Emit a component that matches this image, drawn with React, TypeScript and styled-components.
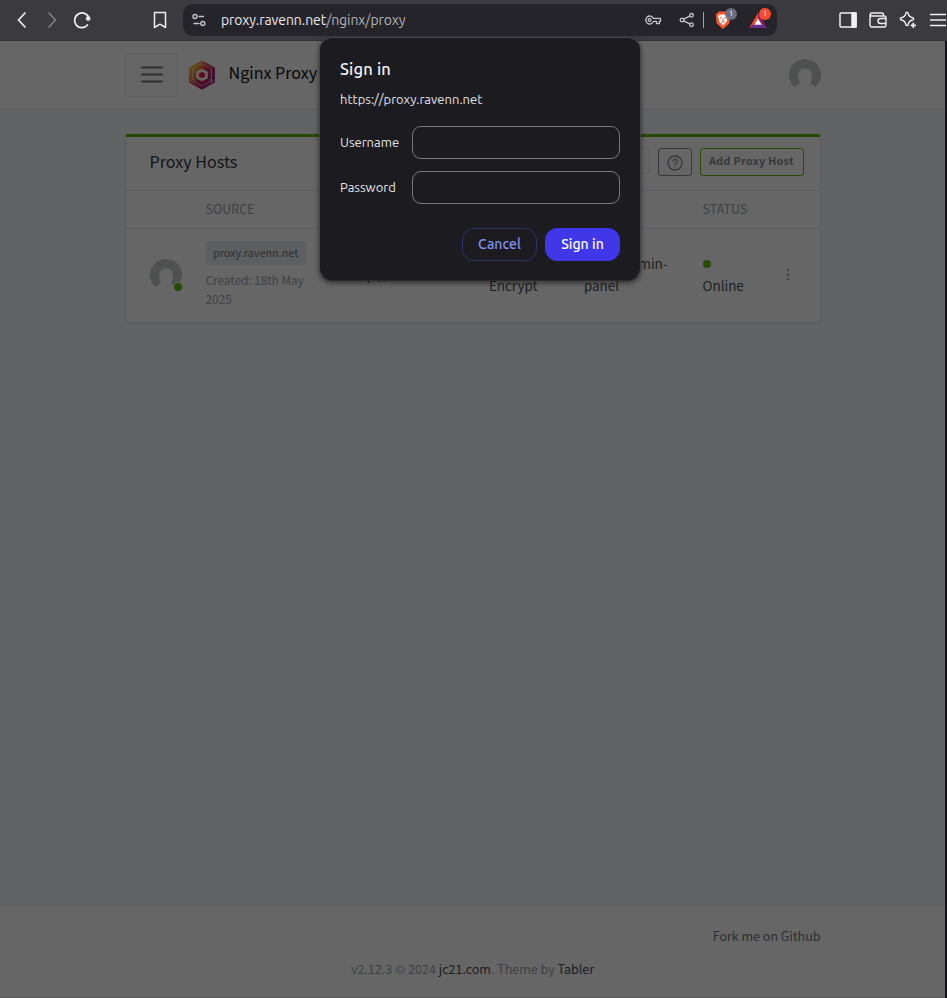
import React from "react";
import styled, { createGlobalStyle } from "styled-components";

const uiFont = `Ubuntu, "Noto Sans", "Open Sans", sans-serif`;
const pageFont = `"Source Sans Pro", "Noto Sans CJK SC", "Noto Sans", sans-serif`;

const GlobalStyle = createGlobalStyle`
  *, *::before, *::after { box-sizing: border-box; }
  body { margin: 0; background: #121214; overflow: hidden; }
`;

const Window = styled.div`
  position: relative;
  width: 947px;
  height: 998px;
  overflow: hidden;
  display: flex;
  flex-direction: column;
`;

/* ---------- browser chrome ---------- */
const Toolbar = styled.div`
  height: 41px;
  flex: none;
  display: flex;
  align-items: center;
  padding: 0 0 1px 7px;
  background: #3b3a3f;
  border-bottom: 1px solid #323136;
  overflow: hidden;
`;
const ToolSlot = styled.div<{ $dim?: boolean }>`
  width: 30px;
  height: 30px;
  flex: none;
  display: flex;
  align-items: center;
  justify-content: center;
  color: ${(p) => (p.$dim ? "#858489" : "#f0eff4")};
  svg { display: block; }
`;
const Spacer = styled.div<{ $w: number }>`
  width: ${(p) => p.$w}px;
  flex: none;
`;
const AddressBar = styled.div`
  width: 594px;
  height: 32px;
  flex: none;
  display: flex;
  align-items: center;
  padding-left: 8px;
  border-radius: 10px;
  background: #25242a;
  color: #c5c4ca;
  svg { display: block; flex: none; }
`;
const Address = styled.div`
  width: 423px;
  flex: none;
  padding-left: 14px;
  font: 14px/20px ${uiFont};
  letter-spacing: -0.07px;
  color: #b4b3b9;
  white-space: nowrap;
  b { font-weight: 400; color: #e9e8ee; }
`;
const BarDivider = styled.div`
  width: 1px;
  height: 16px;
  flex: none;
  margin: 0 11px 0 8px;
  background: #a5a4aa;
`;
const Extension = styled.div`
  position: relative;
  width: 34px;
  height: 20px;
  flex: none;
`;
const Counter = styled.span<{ $color: string }>`
  position: absolute;
  left: 10px;
  top: -2px;
  width: 12px;
  height: 12px;
  border-radius: 6px;
  background: ${(p) => p.$color};
  color: #fff;
  font: 8px/12px ${uiFont};
  text-align: center;
`;

/* ---------- web page ---------- */
const Page = styled.div`
  position: relative;
  width: 945px;
  flex: 1;
  display: flex;
  flex-direction: column;
  background: #f5f7fb;
  color: #495057;
  font: 13.4px/21px ${pageFont};
`;
const Scrim = styled.div`
  position: absolute;
  inset: 0;
  background: rgba(0, 0, 0, 0.6);
`;
const Header = styled.header`
  height: 69px;
  flex: none;
  padding: 0 124px 0 125px;
  display: flex;
  align-items: center;
  background: #fff;
  border-bottom: 1px solid rgba(0, 40, 100, 0.12);
`;
const MenuButton = styled.div`
  width: 53px;
  height: 44px;
  display: flex;
  align-items: center;
  justify-content: center;
  border: 1px solid rgba(0, 40, 100, 0.12);
  border-radius: 3px;
`;
const Brand = styled.div`
  flex: 1;
  display: flex;
  align-items: center;
  gap: 12.5px;
  padding-left: 10px;
  color: #111;
  font-size: 16.1px;
  white-space: nowrap;
  span { padding-bottom: 5px; }
`;
const Avatar = styled.div`
  position: relative;
  width: 32px;
  height: 32px;
  svg { display: block; }
`;
const Presence = styled.span`
  position: absolute;
  right: -1px;
  bottom: -1px;
  width: 10px;
  height: 10px;
  border-radius: 50%;
  border: 1px solid #fff;
  background: #5eba00;
`;
const Card = styled.section`
  width: 696px;
  height: 189px;
  margin: 24px 0 0 125px;
  display: flex;
  flex-direction: column;
  background: #fff;
  border: 1px solid rgba(0, 40, 100, 0.12);
  border-top: 3px solid #5eba00;
  border-radius: 3px;
  box-shadow: 0 1px 2px rgba(0, 0, 0, 0.05);
`;
const CardHeader = styled.div`
  height: 54px;
  flex: none;
  display: flex;
  align-items: center;
  padding: 0 16px 4px 23.6px;
  border-bottom: 1px solid rgba(0, 40, 100, 0.14);
`;
const CardTitle = styled.h3`
  margin: 0;
  flex: 1;
  font-size: 16.1px;
  font-weight: 400;
  color: #343a40;
`;
const SearchBox = styled.div`
  width: 138px;
  height: 26px;
  margin: 0 8px 2px 0;
  border: 1px solid rgba(0, 40, 100, 0.12);
  border-radius: 3px;
`;
const SmallButton = styled.div<{ $w: number; $border: string }>`
  width: ${(p) => p.$w}px;
  height: 28px;
  margin-left: ${(p) => (p.$w > 50 ? 8 : 0)}px;
  display: flex;
  align-items: center;
  justify-content: center;
  border: 1px solid ${(p) => p.$border};
  border-radius: 3px;
  color: #868e96;
  font-size: 10.7px;
  font-weight: 700;
  letter-spacing: 0.35px;
  white-space: nowrap;
  span { padding: 0 1px 2px 0; }
  svg { margin-top: 2px; }
`;
const TableRow = styled.div<{ $head?: boolean }>`
  display: grid;
  grid-template-columns: 56px 143px 140.4px 95px 118.6px 77px 1fr;
  padding: 0 0 ${(p) => (p.$head ? 1 : 2)}px 23.6px;
  align-items: center;
  height: ${(p) => (p.$head ? 38 : 93)}px;
  ${(p) =>
    p.$head &&
    `border-bottom: 1px solid rgba(0,40,100,.14);
     color: #9aa0ac; font-size: 12.5px; text-transform: uppercase;`}
`;
const Cell = styled.div<{ $shift?: number }>`
  line-height: 22px;
  white-space: nowrap;
  padding-bottom: ${(p) => p.$shift || 0}px;
`;
const Tag = styled.div`
  width: 100px;
  height: 24px;
  border-radius: 3px;
  background: #e9ecef;
  color: #6e7687;
  font-size: 10.85px;
  line-height: 23px;
  text-align: center;
`;
const Note = styled.div`
  margin-top: 5px;
  color: #9aa0ac;
  font-size: 11.75px;
  line-height: 19px;
`;
const Dot = styled.span`
  display: block;
  width: 8px;
  height: 8px;
  margin: 8px 0 6px;
  border-radius: 50%;
  background: #5eba00;
`;
const DotMenu = styled.div`
  padding-top: 1px;
  svg { display: block; }
`;
const Footer = styled.footer`
  height: 93px;
  margin-top: auto;
  padding: 19px 124.5px 0;
  background: #fff;
  border-top: 1px solid rgba(0, 40, 100, 0.12);
  border-bottom: 1px solid #e6d8e0;
  color: #9aa0ac;
  font-size: 12.5px;
`;
const FooterLink = styled.div`
  text-align: right;
  color: #6e7687;
`;
const Copyright = styled.div`
  margin-top: 12px;
  text-align: center;
  b { font-weight: 400; color: #495057; }
`;

/* ---------- sign-in dialog ---------- */
const Dialog = styled.div`
  position: absolute;
  left: 319px;
  top: 37px;
  width: 322px;
  height: 244px;
  padding: 21px 20px 19px;
  border: 1px solid #45444b;
  border-bottom-color: #2b2a2f;
  border-radius: 13px;
  background: #1c1b20;
  box-shadow: 0 2px 5px rgba(0, 0, 0, 0.5);
  color: #e3e2e8;
  font: 13px/20px ${uiFont};
  display: flex;
  flex-direction: column;
`;
const DialogTitle = styled.div`
  font-size: 16.5px;
  font-weight: 500;
  letter-spacing: 0.15px;
  color: #f0eff5;
`;
const Origin = styled.div`
  margin: 10px 0 17px;
`;
const Field = styled.label`
  display: flex;
  align-items: center;
  height: 33px;
  margin-bottom: 12px;
  span { width: 72px; padding-bottom: 2px; }
`;
const Input = styled.input`
  width: 208px;
  height: 33px;
  padding: 0 10px;
  border: 1px solid #78777e;
  border-radius: 9px;
  background: transparent;
  color: inherit;
  outline: none;
`;
const Actions = styled.div`
  display: flex;
  justify-content: flex-end;
  gap: 8px;
  margin-top: 12px;
`;
const Button = styled.button<{ $primary?: boolean }>`
  width: 75px;
  height: 33px;
  padding: 0 0 2px;
  border: 1px solid ${(p) => (p.$primary ? "#4038e8" : "#30306f")};
  border-radius: 12px;
  background: ${(p) => (p.$primary ? "#4038e8" : "transparent")};
  color: ${(p) => (p.$primary ? "#fff" : "#8593f0")};
  font: 500 14px/20px ${uiFont};
  letter-spacing: 0.05px;
`;

/* ---------- drawings ---------- */
const Stroke = ({ w, h = w, sw = 1.5, children }: { w: number; h?: number; sw?: number; children: React.ReactNode }) => (
  <svg width={w} height={h} viewBox={`0 0 ${w} ${h}`} fill="none" stroke="currentColor" strokeWidth={sw} strokeLinecap="round" strokeLinejoin="round">
    {children}
  </svg>
);

const Person = () => (
  <svg width="32" height="32" viewBox="0 0 32 32">
    <path
      fill="#c6c7c8"
      fillRule="evenodd"
      d="M16 0a16 16 0 0 1 10.4 28.2c-1.5-2-3.4-3.1-5.8-3.7a8.5 8.5 0 0 0 2.3-7.7c0-4.5-2.8-7.5-6.9-7.5s-6.9 3-6.9 7.5c0 3.1 .8 5.9 2.3 7.7-2.4.6-4.3 1.7-5.8 3.7A16 16 0 0 1 16 0Z"
    />
  </svg>
);

const Logo = () => (
  <svg width="28" height="30" viewBox="0 0 28 30">
    <defs>
      <linearGradient id="brand" x1="0" y1=".2" x2="1" y2=".75">
        <stop offset="0" stopColor="#f9c22e" />
        <stop offset=".3" stopColor="#f28a2c" />
        <stop offset=".55" stopColor="#dd2f50" />
        <stop offset="1" stopColor="#7d2a90" />
      </linearGradient>
      <linearGradient id="lower" x1="0" y1="0" x2="0" y2="1">
        <stop offset=".55" stopColor="#b01874" stopOpacity="0" />
        <stop offset="1" stopColor="#b01874" />
      </linearGradient>
    </defs>
    <path d="M14 .5 27 7.8v14.4L14 29.5 1 22.2V7.8Z" fill="url(#brand)" />
    <path d="M14 .5 27 7.8v14.4L14 29.5 1 22.2V7.8Z" fill="url(#lower)" />
    <path d="M12 4.3 4.5 8.5v9.5M16 4.3l7.5 4.2v9.5M6.5 22l7.5 4.2 7.5-4.2" fill="none" stroke="#fff" strokeOpacity=".6" strokeWidth="1" />
    <g fill="#d6336c" stroke="#fff" strokeOpacity=".8" strokeWidth=".9">
      <circle cx="14" cy="3.8" r="1.4" />
      <circle cx="4.8" cy="20.5" r="1.4" />
      <circle cx="23.2" cy="20.5" r="1.4" />
    </g>
    <path d="m14 10.2 4.4 2.4v4.8L14 19.8l-4.4-2.4v-4.8Z" fill="#e0243f" stroke="#fff" strokeWidth="2.7" />
  </svg>
);

const Toolstrip = () => (
  <Toolbar>
    <ToolSlot><Stroke w={16} sw={1.7}><path d="M11 1 4.5 8 11 15" /></Stroke></ToolSlot>
    <ToolSlot $dim><Stroke w={16} sw={1.5}><path d="m5 1 6.5 7L5 15" /></Stroke></ToolSlot>
    <ToolSlot>
      <Stroke w={18} sw={1.7}>
        <path d="M14.5 14a7.3 7.3 0 1 1 1.6-6" />
        <circle cx="15.2" cy="7.5" r="1.5" fill="currentColor" />
      </Stroke>
    </ToolSlot>
    <Spacer $w={48} />
    <ToolSlot><Stroke w={14} h={18} sw={1.5}><path d="M1.5 1.5h11v15L7 13.2l-5.5 3.3Z" /></Stroke></ToolSlot>
    <Spacer $w={8} />
    <AddressBar>
      <Stroke w={16} sw={1.4}>
        <circle cx="4" cy="4.5" r="2" /><path d="M8 4.5H12.5M3 11.5h5" /><circle cx="11.8" cy="11.5" r="2" />
      </Stroke>
      <Address><b>proxy.ravenn.net</b>/nginx/proxy</Address>
      <Spacer $w={14} />
      <Stroke w={18} h={12} sw={1.3}>
        <path d="M9.4 4.4H16.5v3h-1.2v2.2h-2.8V7.4H9.5a4 4 0 1 1-.1-3Z" /><circle cx="5.6" cy="6" r="1.4" />
      </Stroke>
      <Spacer $w={17} />
      <Stroke w={16} h={16} sw={1.3}>
        <circle cx="3" cy="8" r="1.8" /><circle cx="12.5" cy="3.3" r="1.8" /><circle cx="12.5" cy="12.7" r="1.8" /><path d="m4.7 7.1 6-3M4.7 8.9l6 3" />
      </Stroke>
      <BarDivider />
      <Extension>
        <svg width="17" height="20" viewBox="0 0 17 20">
          <path d="M4 1.5h8l3 3-.7 9L8 19l-6.3-5.500L.7 4.500Z" fill="#fb542b" />
          <path d="m4 4.5 2 .3 2-.6 2 .6 2-.3 1 2.5-1.2 3 .2 1.500L10 13.500l-2 2-2-2L4 11.500l.2-1.500L3 7Z" fill="#fff" />
          <path d="m5 7.500 2 .8M11 7.500l-2 .8M8 9v2.500m-1.800 1L8 11.500l1.800 1" stroke="#fb542b" strokeWidth="1" fill="none" />
        </svg>
        <Counter $color="#6b6f7e">1</Counter>
      </Extension>
      <Extension>
        <svg width="18" height="20" viewBox="0 0 18 20">
          <path d="M9 3 .3 18 9 12Z" fill="#ff4724" />
          <path d="m9 3 8.7 15L9 12Z" fill="#9e1f63" />
          <path d="M.3 18h17.4L9 11Z" fill="#662d91" />
          <path d="m9 8.5 3.7 6.3H5.3Z" fill="#fff" />
        </svg>
        <Counter $color="#ff4b2b">1</Counter>
      </Extension>
    </AddressBar>
    <Spacer $w={56} />
    <ToolSlot><Stroke w={18} h={16}><rect x="1" y="1" width="16" height="14" rx="1" /><path d="M13 1h4v14h-4Z" fill="currentColor" /></Stroke></ToolSlot>
    <ToolSlot>
      <Stroke w={18} h={16} sw={1.4}>
        <path d="M14.5 3.5V2.5A1.5 1.5 0 0 0 13 1H2.8a1.5 1.5 0 0 0 0 3H15a2 2 0 0 1 2 2v7a2 2 0 0 1-2 2H3a2 2 0 0 1-2-2V2.5M17 6.5h-5.500a2.500 2.500 0 0 0 0 5H17" />
      </Stroke>
    </ToolSlot>
    <ToolSlot>
      <Stroke w={18} sw={1.4}>
        <path d="M8 1.2c.6 0 1 .4 1.1 1 .5 2.9 1.7 4.1 4.6 4.6 1.3.2 1.3 1.9 0 2.2-2.9.5-4.1 1.7-4.6 4.6-.2 1.3-1.9 1.3-2.2 0C6.400 10.700 5.200 9.500 2.300 9 1 8.700 1 7 2.300 6.800 5.200 6.300 6.400 5.100 6.900 2.200c.1-.6.5-1 1.1-1Z" />
        <path d="M14.3 12.3v4M12.3 14.3h4" strokeWidth="1.7" />
      </Stroke>
    </ToolSlot>
    <ToolSlot><Stroke w={16} h={14} sw={1.5}><path d="M0 1.5h18M0 7h18M0 12.500h18" /></Stroke></ToolSlot>
  </Toolbar>
);

export default function App() {
  return (
    <Window>
      <GlobalStyle />
      <Toolstrip />
      <Page>
        <Header>
          <MenuButton>
            <svg width="22" height="18" viewBox="0 0 22 18" stroke="#777" strokeWidth="2" strokeLinecap="round">
              <path d="M1 1.500h20M1 8.500h20M1 15.500h20" />
            </svg>
          </MenuButton>
          <Brand><Logo /><span>Nginx Proxy Manager</span></Brand>
          <Avatar><Person /></Avatar>
        </Header>
        <Card>
          <CardHeader>
            <CardTitle>Proxy Hosts</CardTitle>
            <SearchBox />
            <SmallButton $w={34} $border="#868e96">
              <Stroke w={16} sw={1.3}>
                <circle cx="8" cy="8" r="7" /><path d="M6 6.3a2.1 2.1 0 1 1 2.9 2c-.6.3-.9.6-.9 1.2M8 11.7v.1" />
              </Stroke>
            </SmallButton>
            <SmallButton $w={104} $border="#5eba00"><span>Add Proxy Host</span></SmallButton>
          </CardHeader>
          <TableRow $head>
            <Cell /><Cell>Source</Cell><Cell>Destination</Cell><Cell>SSL</Cell><Cell>Access</Cell><Cell>Status</Cell><Cell />
          </TableRow>
          <TableRow>
            <Avatar><Person /><Presence /></Avatar>
            <Cell>
              <Tag>proxy.ravenn.net</Tag>
              <Note>Created: 18th May<br />2025</Note>
            </Cell>
            <Cell $shift={2}>http://127.0.0.1:81</Cell>
            <Cell $shift={1}>Let's<br />Encrypt</Cell>
            <Cell $shift={1}>nginx-admin-<br />panel</Cell>
            <Cell $shift={1}><Dot />Online</Cell>
            <DotMenu>
              <svg width="16" height="16" viewBox="0 0 16 16" fill="#9aa0ac">
                <circle cx="8" cy="3.2" r="1.2" /><circle cx="8" cy="7.7" r="1.2" /><circle cx="8" cy="12.2" r="1.2" />
              </svg>
            </DotMenu>
          </TableRow>
        </Card>
        <Footer>
          <FooterLink>Fork me on Github</FooterLink>
          <Copyright>v2.12.3 © 2024 <b>jc21.com</b>. Theme by <b>Tabler</b></Copyright>
        </Footer>
        <Scrim />
      </Page>
      <Dialog>
        <DialogTitle>Sign in</DialogTitle>
        <Origin>https://proxy.ravenn.net</Origin>
        <Field><span>Username</span><Input /></Field>
        <Field><span>Password</span><Input type="password" /></Field>
        <Actions><Button>Cancel</Button><Button $primary>Sign in</Button></Actions>
      </Dialog>
    </Window>
  );
}
